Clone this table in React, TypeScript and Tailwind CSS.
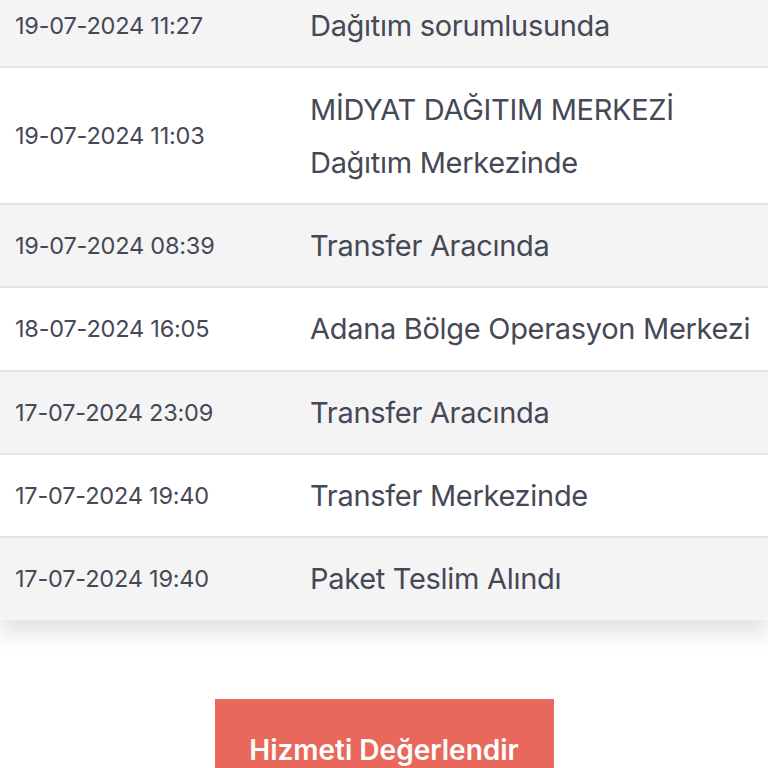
const rows: { date: string; lines: string[] }[] = [
  { date: "19-07-2024 11:27", lines: ["Dağıtım sorumlusunda"] },
  { date: "19-07-2024 11:03", lines: ["MİDYAT DAĞITIM MERKEZİ", "Dağıtım Merkezinde"] },
  { date: "19-07-2024 08:39", lines: ["Transfer Aracında"] },
  { date: "18-07-2024 16:05", lines: ["Adana Bölge Operasyon Merkezi"] },
  { date: "17-07-2024 23:09", lines: ["Transfer Aracında"] },
  { date: "17-07-2024 19:40", lines: ["Transfer Merkezinde"] },
  { date: "17-07-2024 19:40", lines: ["Paket Teslim Alındı"] },
]

export default function App() {
  return (
    <div className="min-h-screen overflow-hidden bg-white font-['Inter','Noto_Sans',sans-serif] text-[#454955]">
      {/* Hareket tablosu */}
      <div className="-mt-[15px] shadow-[0_12px_22px_rgba(0,0,0,0.13)]">
        {rows.map((r, i) => (
          <div
            key={i}
            className={`flex items-center py-[14.2px] ${i > 0 ? "border-t-2 border-[#e4e4e6]" : ""} ${i % 2 === 0 ? "bg-[#f4f4f5]" : "bg-white"}`}
          >
            <div className="w-[310px] shrink-0 pl-[15px] text-[23.5px] tracking-[-0.2px]">{r.date}</div>
            <div className="flex flex-col">
              {r.lines.map((l) => (
                <p key={l} className="whitespace-nowrap text-[29px] leading-[53px] tracking-[-0.3px]">
                  {l}
                </p>
              ))}
            </div>
          </div>
        ))}
      </div>

      <div className="mt-[79px] flex justify-center">
        <button className="h-[100px] w-[339px] bg-[#e8695b] pt-[3px] text-[28px] font-semibold text-white">
          Hizmeti Değerlendir
        </button>
      </div>
    </div>
  )
}
